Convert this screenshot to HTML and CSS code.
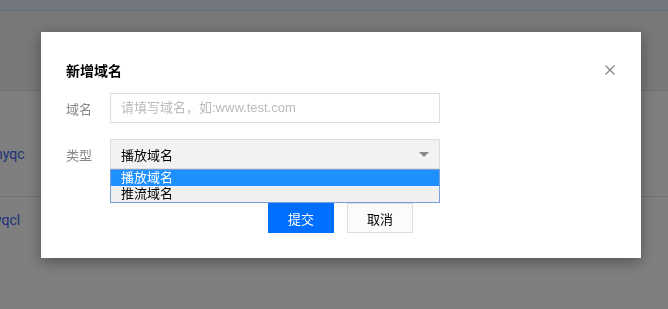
FILE: index.html
```html
<!DOCTYPE html>
<html lang="zh-CN">
<head>
<meta charset="UTF-8" />
<title>新增域名</title>
<link rel="stylesheet" href="styles.css">
</head>
<body>

<div class="page">
  <div class="topbar"></div>
  <div class="toolbar"></div>
  <div class="row row-tall"><span class="link">nyqc</span></div>
  <div class="row"><span class="link">yqcl</span></div>
</div>

<div class="mask">
  <div class="dialog">
    <div class="dialog-head">
      <h3>新增域名</h3>
      <svg class="close" width="10" height="10" viewBox="0 0 10 10">
        <path d="M0.5 0.5 L9.5 9.5 M9.5 0.5 L0.5 9.5" stroke="#888" stroke-width="1.3" fill="none"/>
      </svg>
    </div>

    <div class="form-row">
      <label class="label">域名</label>
      <div class="input placeholder">请填写域名，如:www.test.com</div>
    </div>

    <div class="form-row form-row-select">
      <label class="label">类型</label>
      <div class="select-wrap">
        <div class="select">
          <span>播放域名</span>
          <i class="arrow"></i>
        </div>
        <ul class="options">
          <li class="active">播放域名</li>
          <li>推流域名</li>
        </ul>
      </div>
    </div>

    <div class="actions">
      <button class="btn btn-primary" type="button">提交</button>
      <button class="btn" type="button">取消</button>
    </div>
  </div>
</div>

</body>
</html>
```

FILE: styles.css
```css
* {
  box-sizing: border-box;
}
body {
  margin: 0;
  font-family: "Liberation Sans", "Noto Sans CJK SC", sans-serif;
  font-size: 13px;
  color: #333;
  background: #fff;
  overflow: hidden;
  height: 100vh;
}

/* page behind the mask */
.topbar {
  height: 11px;
  background: #e4ecfe;
  border-bottom: 1px solid #b4d4ff;
}
.toolbar {
  height: 79px;
  background: #f0f0f0;
}
.row {
  border-top: 1px solid #e2e2e2;
  height: 106px;
  padding-top: 15px;
}
.row-tall {
  padding-top: 55px;
}
.link {
  display: block;
  font-family: Roboto, "Liberation Sans", sans-serif;
  font-size: 14px;
  color: #3a66f0;
  margin-left: -5px;
}

/* mask + dialog */
.mask {
  position: fixed;
  inset: 0;
  background: rgba(0,0,0,0.5);
  padding: 32px 0 0 41px;
}
.dialog {
  width: 600px;
  background: #fff;
  padding: 28px 26px 25px 25px;
  box-shadow: 0 4px 14px rgba(0,0,0,0.35);
}
.dialog-head {
  display: flex;
  justify-content: space-between;
  align-items: center;
  height: 20px;
  margin-bottom: 13px;
}
.dialog-head h3 {
  margin: 0;
  font-size: 14px;
  font-weight: bold;
  color: #000;
}
.close {
  display: block;
}
.form-row {
  display: flex;
  align-items: center;
  margin-bottom: 16px;
}
.form-row-select {
  margin-bottom: 34px;
}
.label {
  width: 44px;
  color: #888;
}
.input {
  width: 330px;
  height: 30px;
  line-height: 28px;
  border: 1px solid #ddd;
  padding: 0 10px;
}
.placeholder {
  color: #bbb;
}
.select-wrap {
  position: relative;
  width: 330px;
}
.select {
  height: 30px;
  border: 1px solid #ddd;
  background: #f2f2f2;
  display: flex;
  align-items: center;
  justify-content: space-between;
  padding: 0 10px;
  color: #000;
}
.arrow {
  width: 0;
  height: 0;
  border-left: 5px solid transparent;
  border-right: 5px solid transparent;
  border-top: 5px solid #888;
}
.options {
  position: absolute;
  top: 30px;
  left: 0;
  right: 0;
  margin: 0;
  padding: 0;
  list-style: none;
  background: #f0f0f0;
  border: 1px solid #7a9fd8;
  z-index: 2;
}
.options li {
  height: 16px;
  line-height: 16px;
  padding-left: 10px;
  color: #000;
}
.options li.active {
  background: #1e90ff;
  color: #fff;
}
.actions {
  display: flex;
  justify-content: center;
  gap: 13px;
}
.btn {
  width: 66px;
  height: 30px;
  font-family: inherit;
  font-size: 13px;
  border: 1px solid #ddd;
  background: #fbfbfb;
  color: #000;
  padding: 0;
}
.btn-primary {
  background: #006eff;
  border-color: #006eff;
  color: #fff;
}
```
